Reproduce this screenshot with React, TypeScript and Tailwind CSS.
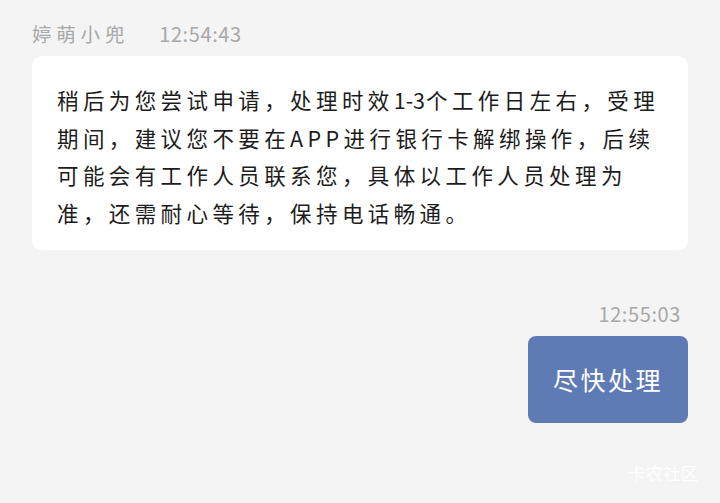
import React from "react";

const font = { fontFamily: '"Noto Sans CJK SC", "Noto Sans", sans-serif' };

export default function App() {
  return (
    <div className="w-[720px] h-[503px] bg-[#f4f4f4] overflow-hidden relative" style={font}>
      <div className="flex flex-col px-8">
        <div className="flex items-center h-[20px] mt-[24px] text-[#a8a8a8] leading-none">
          <span className="text-[19.5px] tracking-[4.8px]">婷萌小兜</span>
          <span className="ml-[30px] text-[20px] tracking-[0.6px]">12:54:43</span>
        </div>
        <div className="mt-[12px] bg-white rounded-[10px] pl-[25px] pr-4 pt-[25px] pb-[19px] text-[21.5px] leading-[37.5px] text-[#1c1c1c] tracking-[4.4px]">
          <div className="whitespace-nowrap">
            稍后为您尝试申请，处理时效<span className="tracking-normal mr-[1px]">1-3</span>个工作日左右，受理
          </div>
          <div className="whitespace-nowrap">期间，建议您不要在APP进行银行卡解绑操作，后续</div>
          <div className="whitespace-nowrap">可能会有工作人员联系您，具体以工作人员处理为</div>
          <div className="whitespace-nowrap">准，还需耐心等待，保持电话畅通。</div>
        </div>
        <div className="mt-[54px] flex justify-end pr-[7px] text-[20px] leading-[20px] text-[#a8a8a8] tracking-[0.6px]">
          12:55:03
        </div>
        <div className="mt-[12px] flex justify-end">
          <div className="w-[160px] h-[87px] bg-[#5e7bb6] rounded-[8px] flex items-center justify-center text-white text-[25px] tracking-[2.5px]">
            尽快处理
          </div>
        </div>
      </div>
      <div className="absolute right-[22px] bottom-[22px] text-white text-[17.5px] leading-none">卡农社区</div>
    </div>
  );
}
